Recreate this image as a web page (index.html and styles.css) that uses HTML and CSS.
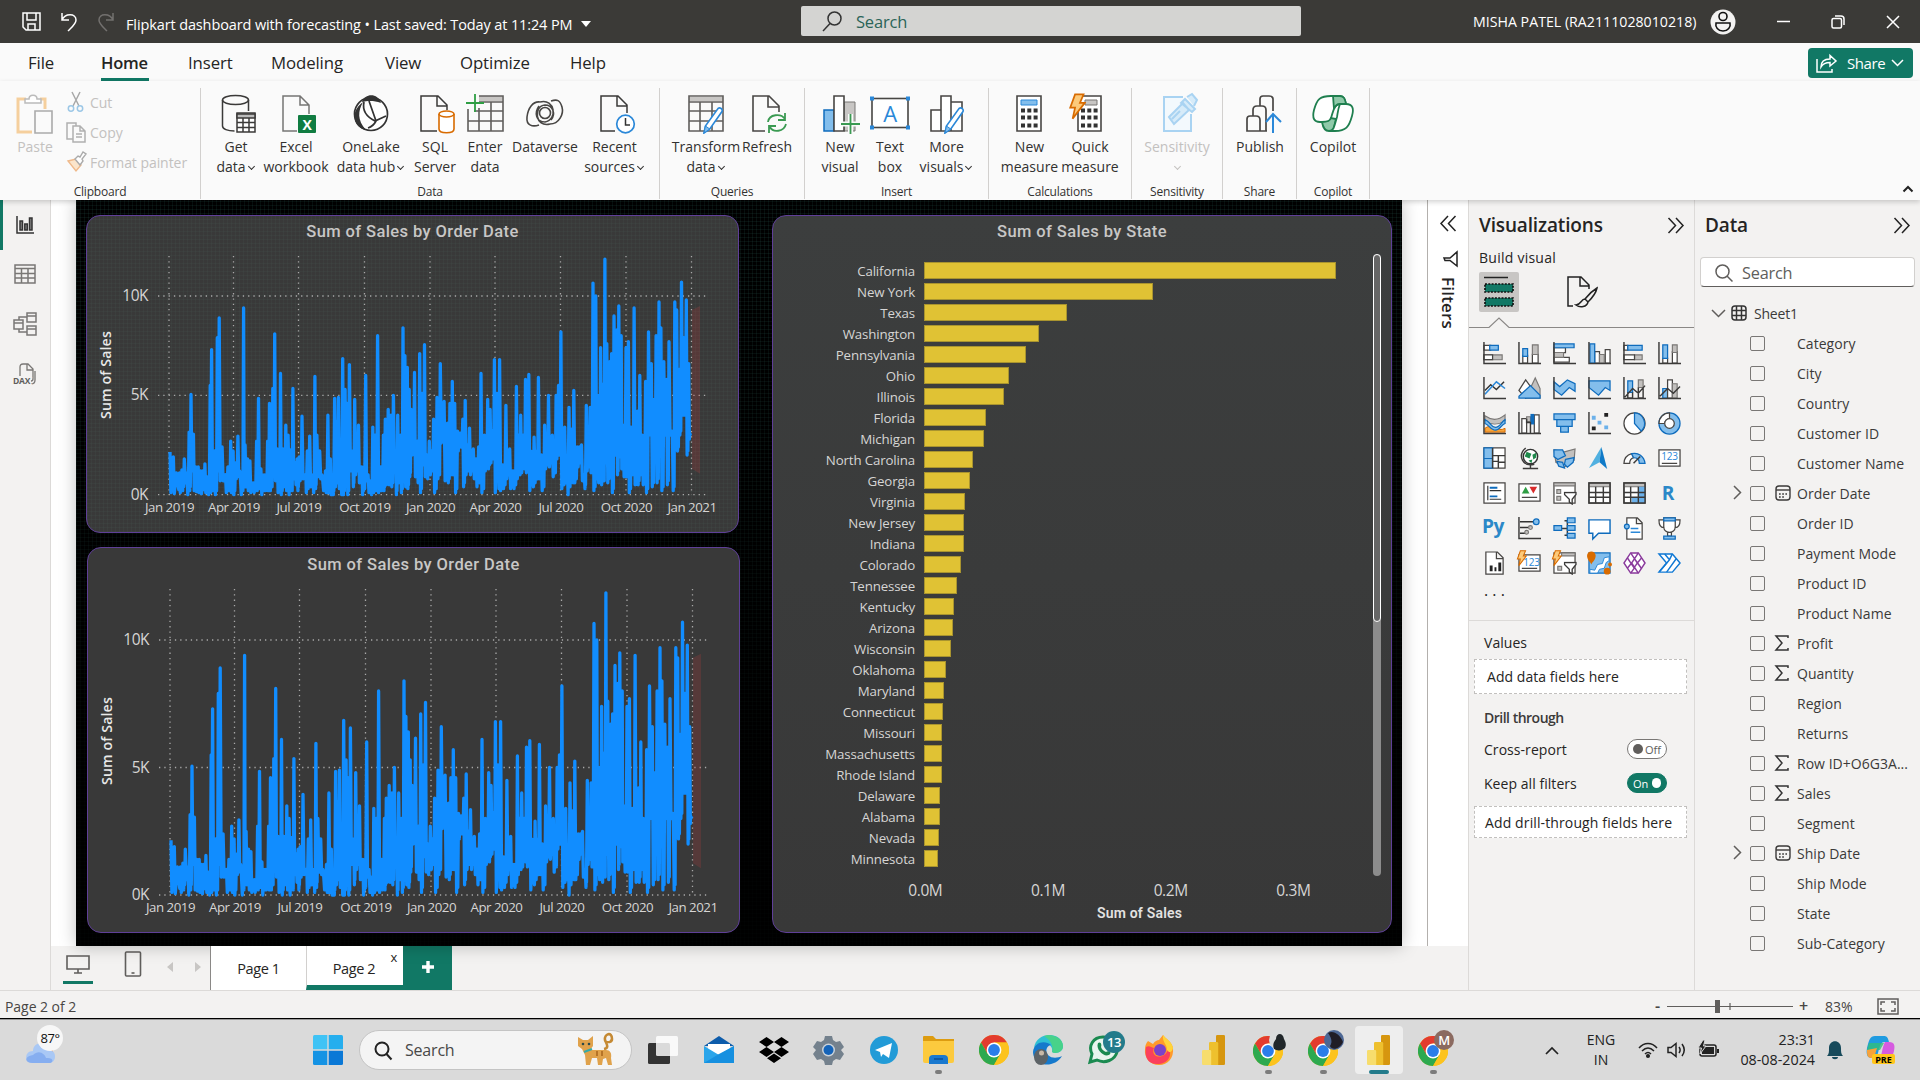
FILE: index.html
```html
<!DOCTYPE html>
<html lang="en">
<head>
<meta charset="utf-8">
<title>Flipkart dashboard with forecasting</title>
<link rel="stylesheet" href="styles.css">
</head>
<body>
<svg class="defs" width="0" height="0">
  <defs>
    <symbol id="chrome" viewBox="0 0 30 30"><circle cx="15" cy="15" r="15" fill="#fbbc05"/><path d="M2 7.5A15 15 0 0 1 28 7.5L15 7.5 8.5 18.8z" fill="#e33b2e"/><path d="M2 7.5 8.5 18.8 21.5 18.8 15 30A15 15 0 0 1 2 7.5z" fill="#2da94f"/><path d="M15 7.5H28A15 15 0 0 1 15 30L21.5 18.8z" fill="#fcc31e"/><circle cx="15" cy="15" r="7.4" fill="#fff"/><circle cx="15" cy="15" r="5.9" fill="#2b7de9"/></symbol>
    <symbol id="pbi" viewBox="0 0 24 30"><rect x="14" y="0" width="9" height="30" rx="1.2" fill="#d6960f"/><path d="M7 8.2a1.2 1.2 0 0 1 1.2-1.2H15a1.2 1.2 0 0 1 1.2 1.2V30H7z" fill="#eec02e"/><path d="M0 16.2A1.2 1.2 0 0 1 1.2 15H8a1.2 1.2 0 0 1 1.2 1.2V30H1.2A1.2 1.2 0 0 1 0 28.8z" fill="#f7dd6d"/></symbol>
    <symbol id="pencil" viewBox="0 0 20 28"><path d="M1 27l1.4-7L15 2.5a2.6 2.6 0 0 1 4 3L6.800 23z" fill="#fff" stroke="#2b88d8" stroke-width="1.600"/><path d="M1 27l1.400-7 4.400 3z" fill="#83beec" stroke="#2b88d8"/></symbol>
    <symbol id="bolt" viewBox="0 0 14 22"><path d="M5 1h7L9 8h4L3 21l2-9H1z" fill="#fcca7a" stroke="#d86b00" stroke-width="1.400"/></symbol>
    <symbol id="funnel" viewBox="0 0 14 14"><path d="M1 1h12v2L9 8v5l-3-2V8L1 3z" fill="#fff" stroke="#3b3a39" stroke-width="1.400"/></symbol>
    <symbol id="cal" viewBox="0 0 16 16"><rect x="1" y="1" width="14" height="14" rx="3" fill="none" stroke="#3b3a39" stroke-width="1.400"/><path d="M1 5h14" stroke="#3b3a39" stroke-width="1.400"/><path d="M4 9h8M4 12h5" stroke="#3b3a39" stroke-width="1.700" stroke-dasharray="1.700 1.500"/></symbol>
  </defs>
</svg>

<header class="titlebar">
  <div class="quick">
    <svg width="19" height="19" viewBox="0 0 19 19" class="ln w"><path d="M1 1h17v17H4l-3-3zM5 1v7h9V1M6 18v-6h7v6"/></svg>
    <svg width="18" height="20" viewBox="0 0 18 20" class="ln w"><path d="M2 1v7h7M2 8C5 1 16 1 16 8c0 4-4 7-8 11"/></svg>
    <svg width="18" height="20" viewBox="0 0 18 20" class="ln dim"><path d="M16 1v7H9M16 8C13 1 2 1 2 8c0 4 4 7 8 11"/></svg>
  </div>
  <div class="doc"><span>Flipkart dashboard with forecasting • Last saved: Today at 11:24 PM</span><i class="caret"></i></div>
  <div class="topsearch">
    <svg width="20" height="21" viewBox="0 0 20 21" class="ln" stroke="#333"><circle cx="12.500" cy="7.500" r="6.500"/><path d="M8 12.500L1 20"/></svg>
    <span>Search</span>
  </div>
  <div class="user">
    <span>MISHA PATEL (RA2111028010218)</span>
    <svg class="avatar" width="26" height="26" viewBox="0 0 26 26"><circle cx="13" cy="13" r="12.500" fill="#f3f2f1"/><circle cx="13" cy="7.500" r="4" fill="none" stroke="#111" stroke-width="1.600"/><path d="M6 14h14c1 4-2 8-7 8s-8-4-7-8z" fill="none" stroke="#111" stroke-width="1.600"/></svg>
    <svg width="14" height="14" viewBox="0 0 14 14" class="ln w"><path d="M1 6.500h13"/></svg>
    <svg width="14" height="14" viewBox="0 0 14 14" class="ln w"><rect x="1" y="3.500" width="9.500" height="9.500" rx="1.500"/><path d="M4 1h6a3 3 0 0 1 3 3v6"/></svg>
    <svg width="14" height="14" viewBox="0 0 14 14" class="ln w"><path d="M1 1l12 12M13 1L1 13"/></svg>
  </div>
</header>

<nav class="menu">
  <a class="m1">File</a><a class="m2 on">Home</a><a class="m3">Insert</a><a class="m4">Modeling</a><a class="m5">View</a><a class="m6">Optimize</a><a class="m7">Help</a>
  <button class="share"><svg width="21" height="19" viewBox="0 0 21 19" class="ln w"><path d="M1 5v13h15v-3M5 13c0-5 3-8 9-8V1.500l6 5.500-6 5V8.500c-4 0-7 1-9 4.500z"/></svg><span>Share</span><svg width="13" height="8" viewBox="0 0 13 8" class="ln w"><path d="M1 1l5.500 5.500L12 1"/></svg></button>
</nav>

<section class="ribbon">
  <div class="group g-clip">
    <div class="btns">
      <div class="btn off w-paste"><svg width="40" height="40" viewBox="0 0 40 40"><path d="M11 5H3v33h14M25 5h5v10" fill="none" stroke="#f5cf9d" stroke-width="3"/><path d="M10 9V5h4c0-5 8-5 8 0h4v4z" fill="#fff" stroke="#bbb" stroke-width="1.500"/><path d="M20 17h17v22H20z" fill="#fafafa" stroke="#aaa" stroke-width="1.600"/></svg><span>Paste</span></div>
      <div class="small off">
        <div><svg width="20" height="20" viewBox="0 0 20 20" class="ln" stroke="#a8a8a8"><path d="M6 0l7 14M14 0L7 14"/><circle cx="5" cy="16.500" r="2.700" stroke="#9cc7e6"/><circle cx="14" cy="16.500" r="2.700" stroke="#9cc7e6"/></svg><span>Cut</span></div>
        <div><svg width="20" height="20" viewBox="0 0 20 20" class="ln" stroke="#b0b0b0"><path d="M7 17H1V1h9v3M7 4h7l5 5v11H7zM14 4v5h5M10 12h6M10 15h6"/></svg><span>Copy</span></div>
        <div><svg width="20" height="20" viewBox="0 0 20 20"><path d="M2 9l8-2 5 6-5 6z" fill="#fbe5cb" stroke="#efb98a" stroke-width="1.400"/><path d="M9 7l3-3 2 1 3-5 3 2-4 5 1 2-3 4z" fill="#fff" stroke="#aaa" stroke-width="1.400"/></svg><span>Format painter</span></div>
      </div>
    </div>
    <b>Clipboard</b>
  </div>
  <div class="group g-data">
    <div class="btns">
      <div class="btn" data-w="60"><svg width="40" height="40" viewBox="0 0 40 40" class="ln" stroke="#3b3a39"><ellipse cx="19.500" cy="6" rx="13" ry="4.500"/><path d="M6.500 6v26c0 3 5 5 12 5M32.500 6v11"/><path d="M21 19h18v19H21z" fill="#fff"/><path d="M21 20h18v4H21z" fill="#bbb"/><path d="M21 28.500h18M21 33.500h18M27 24v14M33 24v14"/></svg><span>Get<br>data<i class="dd"></i></span></div>
      <div class="btn" data-w="60"><svg width="40" height="40" viewBox="0 0 40 40"><path d="M21 37H7V2h17l9 9v9M24 2v9h9" fill="none" stroke="#767574" stroke-width="1.500"/><rect x="22" y="21" width="18" height="18" rx="1" fill="#107c41"/><text x="31" y="36" class="xl">X</text></svg><span>Excel<br>workbook</span></div>
      <div class="btn" data-w="90"><svg width="40" height="40" viewBox="0 0 40 40"><circle cx="20" cy="20" r="16.500" fill="#fff" stroke="#333" stroke-width="1.700"/><path d="M11 8C14-1 27-1 30 9 22 6 16 7 11 8zM12 8C7 17 6 26 15 36 3 34-2 18 12 8z" fill="#333"/><path d="M13 8c-2 9 3 15 11 19l11-5M18 7l7 20c-2 4-5 6-8 7" fill="none" stroke="#333" stroke-width="1.700"/></svg><span>OneLake<br>data hub<i class="dd"></i></span></div>
      <div class="btn" data-w="38"><svg width="40" height="40" viewBox="0 0 40 40"><path d="M22 37H6V2h17l9 9v5M22 2v10h10" fill="none" stroke="#3b3a39" stroke-width="1.500"/><path d="M24 20v15c0 5 15 5 15 0V20" fill="#fff" stroke="#d86b00" stroke-width="1.600"/><ellipse cx="31.500" cy="20" rx="7.500" ry="3" fill="#fff" stroke="#d86b00" stroke-width="1.600"/></svg><span>SQL<br>Server</span></div>
      <div class="btn" data-w="62"><svg width="40" height="40" viewBox="0 0 40 40"><path d="M14 2h23v5H14z" fill="#c8c6c4"/><path d="M14 2h24v35H3V15M14 8h24M9 17h29M3 27h35M14 14v23M26 8v29" fill="none" stroke="#605e5c" stroke-width="1.600"/><path d="M1 9h18M10 0v18" stroke="#2f9e44" stroke-width="1.800"/></svg><span>Enter<br>data</span></div>
      <div class="btn" data-w="58"><svg width="40" height="40" viewBox="0 0 40 40" fill="none" stroke="#484644" stroke-width="1.600"><circle cx="20" cy="19" r="5.500"/><path d="M25 30C10 34 8 12 20 11c8 0 11 9 6 15M15 8c15-4 18 18 5 20-9 0-11-9-6-16M25 30c9 0 14-10 12-17S32 5 26 7M15 8C8 7 3 14 2 23s6 10 12 8"/></svg><span>Dataverse</span></div>
      <div class="btn" data-w="81"><svg width="40" height="40" viewBox="0 0 40 40"><path d="M20 37H6V2h17l9 9v8M22 2v10h10" fill="none" stroke="#3b3a39" stroke-width="1.500"/><circle cx="30.500" cy="30" r="8.800" fill="#fff" stroke="#2b88d8" stroke-width="1.700"/><path d="M30.500 24v7H35" fill="none" stroke="#333" stroke-width="1.500"/></svg><span>Recent<br>sources<i class="dd"></i></span></div>
    </div>
    <b>Data</b>
  </div>
  <div class="group g-query">
    <div class="btns">
      <div class="btn" data-w="78"><svg width="40" height="40" viewBox="0 0 40 40"><path d="M3 3h34v4H3z" fill="#c8c6c4"/><path d="M3 2h34v35H3zM3 8h34M3 17h34M3 27h34M14 8v29M26 8v29" fill="none" stroke="#605e5c" stroke-width="1.600"/><use href="#pencil" x="14" y="12" width="26" height="28"/></svg><span>Transform<br>data<i class="dd"></i></span></div>
      <div class="btn" data-w="44"><svg width="40" height="40" viewBox="0 0 40 40"><path d="M18 37H6V2h16l10 10v6M21 2v11h11" fill="none" stroke="#484644" stroke-width="1.600"/><path d="M21 28c1-8 13-9 17-3M39 30c-2 8-13 9-16 3M38 19v7h-7M22 39v-7h7" fill="none" stroke="#3a9a52" stroke-width="1.800"/></svg><span>Refresh</span></div>
    </div>
    <b>Queries</b>
  </div>
  <div class="group g-insert">
    <div class="btns">
      <div class="btn" data-w="50"><svg width="40" height="40" viewBox="0 0 40 40"><path d="M24 8h11v29H24z" fill="#c8c6c4" stroke="#797775"/><path d="M4 16h10v21H4z" fill="#83beec" stroke="#0f6cbd" stroke-width="1.500"/><path d="M14 2h10v35H14z" fill="#fff" stroke="#484644" stroke-width="1.600"/><path d="M21 30h19M30.500 20v20" stroke="#fafafa" stroke-width="5"/><path d="M21 30h19M30.500 20v20" stroke="#3a9a52" stroke-width="1.800"/></svg><span>New<br>visual</span></div>
      <div class="btn" data-w="50"><svg width="40" height="40" viewBox="0 0 40 40"><rect x="2" y="4.500" width="36" height="29" fill="#fff" stroke="#484644" stroke-width="1.600"/><path d="M0 2.500h4v4H0zM36 2.500h4v4h-4zM0 31.500h4v4H0zM36 31.500h4v4h-4z" fill="#2b88d8"/><text x="20" y="28" class="tb">A</text></svg><span>Text<br>box</span></div>
      <div class="btn" data-w="63"><svg width="40" height="40" viewBox="0 0 40 40"><path d="M4 16h10v21H4zM14 2h10v35H14zM24 8h11v29H24z" fill="#fff" stroke="#484644" stroke-width="1.600"/><use href="#pencil" x="14" y="12" width="26" height="28"/></svg><span>More<br>visuals<i class="dd"></i></span></div>
    </div>
    <b>Insert</b>
  </div>
  <div class="group g-calc">
    <div class="btns">
      <div class="btn" data-w="61"><svg width="40" height="40" viewBox="0 0 40 40"><path d="M7 2h24v35H7z" fill="#fff" stroke="#484644" stroke-width="1.600"/><path d="M11 6h16v5H11z" fill="#83beec" stroke="#2b88d8"/><path d="M11 16.500h17M11 23.500h17M11 31.500h17" stroke="#333" stroke-width="4" stroke-dasharray="4 2.300"/></svg><span>New<br>measure</span></div>
      <div class="btn" data-w="60"><svg width="40" height="40" viewBox="0 0 40 40"><path d="M8 2h23v35H8z" fill="#fff" stroke="#484644" stroke-width="1.600"/><path d="M15 6h12v5H15z" fill="#c8c6c4" stroke="#797775"/><path d="M11 16.500h17M11 23.500h17M11 31.500h17" stroke="#333" stroke-width="4" stroke-dasharray="4 2.300"/><use href="#bolt" x="-1" y="-1" width="17" height="27"/></svg><span>Quick<br>measure</span></div>
    </div>
    <b>Calculations</b>
  </div>
  <div class="group g-sens">
    <div class="btns">
      <div class="btn off" data-w="76"><svg width="40" height="40" viewBox="0 0 40 40"><path d="M26 3H7v34h27V20" fill="#f3f9fd" stroke="#a9d3f2" stroke-width="2"/><path d="M12 23l14-14 6 7-15 14zM15 25l8-8M24 9l4-4 10 10-3 3zM30 3l5-3 5 6-3 6" fill="#d6ebf9" stroke="#a9d3f2" stroke-width="2"/></svg><span>Sensitivity<br><i class="dd"></i></span></div>
    </div>
    <b>Sensitivity</b>
  </div>
  <div class="group g-share">
    <div class="btns">
      <div class="btn" data-w="60"><svg width="40" height="40" viewBox="0 0 40 40" fill="none" stroke="#484644" stroke-width="1.700"><path d="M7 37V25c0-3 2-3 3-3h6c3 0 4 1 4 4v11zM13 22v-6c0-3 1-4 4-4h5c3 0 4 1 4 4v21M20 12V5c0-2 1-3 3-3h6c3 0 4 1 4 3v12M20 37h7"/><path d="M33 39V21M26 28l7-8 8 8" stroke="#2b88d8" stroke-width="2"/></svg><span>Publish</span></div>
    </div>
    <b>Share</b>
  </div>
  <div class="group g-cop">
    <div class="btns">
      <div class="btn" data-w="60"><svg width="40" height="40" viewBox="0 0 40 40" stroke="#1f7f4f" stroke-width="1.800"><path d="M18 2h9c4 0 5 3 6 8h-6c-5 0-6 4-9 14-1 4-3 4-7 4H7C1 28-1 24 1 16 4 5 7 2 18 2z" fill="#fff"/><path d="M20 2h7c4 0 5 3 6 8h-6c-3 0-5 2-6 5zM9 28c1 6 3 9 7 9h4l3-12-5-1c-1 3-3 4-9 4z" fill="#8fc9a9"/><path d="M27 10h6c7 0 8 5 6 12-3 11-6 15-17 15h-6c5 0 5-4 8-14 1-6 1-8 3-13z" fill="#fff"/></svg><span>Copilot</span></div>
    </div>
    <b>Copilot</b>
  </div>
  <svg class="collapse" width="12" height="8" viewBox="0 0 12 8"><path d="M1.500 6.500L6 2l4.500 4.500" fill="none" stroke="#222" stroke-width="2"/></svg>
</section>

<main class="work">
  <aside class="rail">
    <div class="sel"><svg width="20" height="20" viewBox="0 0 20 20" fill="none" stroke="#333" stroke-width="1.500"><path d="M2 1v17h17"/><path d="M5 6h2.500v9H5zM9.800 9h2.500v6H9.800zM14.500 3H17v12h-2.500z" fill="#888"/></svg></div>
    <div><svg width="22" height="20" viewBox="0 0 22 20" fill="none" stroke="#797775" stroke-width="1.500"><path d="M1 1h20v18H1zM1 4.500h20M1 9.500h20M1 14h20M7.500 4.500V19M14 4.500V19"/></svg></div>
    <div><svg width="24" height="24" viewBox="0 0 24 24" fill="none" stroke="#797775" stroke-width="1.500"><path d="M1 8h9v9H1zM1 11h9M14 1h9v9h-9zM14 4h9M14 14h9v9h-9zM14 17h9M6 8V5h8M6 17v3h8"/></svg></div>
    <div><svg width="24" height="24" viewBox="0 0 24 24" fill="none" stroke="#797775" stroke-width="1.300"><path d="M7 14V5c0-2 1-3 3-3h5l5 5v10c0 1-1 2-2 2M14 2v6h6M22 9v9c0 3-2 4-4 4"/><text x="0" y="22" class="dax">DAX</text></svg></div>
  </aside>
  <section class="center">
    <div class="stage">
      <div class="report">
        <article class="card c1"><h3>Sum of Sales by Order Date</h3><svg class="line" id="line1" width="650" height="285"></svg></article>
        <article class="card c3"><h3>Sum of Sales by State</h3>
          <div class="barwrap"><div id="bars"></div><div class="scroll"><div></div></div></div>
          <div class="ticks"><span>0.0M</span><span>0.1M</span><span>0.2M</span><span>0.3M</span></div>
          <div class="axt">Sum of Sales</div>
        </article>
        <article class="card c2"><h3>Sum of Sales by Order Date</h3><svg class="line" id="line2" width="650" height="352"></svg></article>
      </div>
      <div class="filters">
        <svg width="17" height="17" viewBox="0 0 17 17" class="ln" stroke="#222"><path d="M8 1L1 8.500 8 16M15.500 1L8.500 8.500l7 7.500"/></svg>
        <svg width="15" height="16" viewBox="0 0 15 16" class="ln" stroke="#222"><path d="M14 1v14L7 9.500H2L1 7h6z"/></svg>
        <span>Filters</span>
      </div>
    </div>
    <footer class="tabs">
      <div class="dev on"><svg width="26" height="22" viewBox="0 0 26 22" fill="none" stroke="#605e5c" stroke-width="1.600"><path d="M2 2h22v13H2zM13 15v4M9 19h8"/></svg></div>
      <div class="dev ph"><svg width="18" height="26" viewBox="0 0 18 26" fill="none" stroke="#605e5c" stroke-width="1.600"><rect x="1.500" y="1" width="15" height="24" rx="1"/><path d="M7.500 22h3"/></svg></div>
      <div class="arr"><svg width="36" height="12" viewBox="0 0 36 12" fill="#c8c6c4"><path d="M7 1v10L1 6zM29 1v10l6-5z"/></svg></div>
      <div class="tab">Page 1</div>
      <div class="tab cur">Page 2<i>x</i></div>
      <div class="add"><svg width="14" height="14" viewBox="0 0 14 14"><path d="M7 1v12M1 7h12" stroke="#fff" stroke-width="3.400"/></svg></div>
    </footer>
  </section>

  <section class="vis">
    <div class="phead"><h2>Visualizations</h2><svg width="17" height="17" viewBox="0 0 17 17" class="ln" stroke="#222"><path d="M1.500 1l7 7.500-7 7.500M9 1l7 7.500L9 16"/></svg></div>
    <h4>Build visual</h4>
    <div class="modes">
      <div class="mode on"><svg width="40" height="40" viewBox="0 0 40 40"><path d="M5 5.500h24" stroke="#222" stroke-width="1.500"/><path d="M6 12h28v8H6zM6 26h28v8H6z" fill="#117865" stroke="#111" stroke-width="1.700" stroke-dasharray="2 1.300"/></svg></div>
      <div class="mode"><svg width="32" height="32" viewBox="0 0 32 32" fill="none" stroke="#222" stroke-width="1.500"><path d="M6 30H1V1h13l8 8v4M13 1v9h9M30 12c-5 3-9 7-12 11l3 3c4-4 8-9 9-14zM18 23c-4 0-4 6-9 6 4 3 11 2 12-3"/></svg></div>
    </div>
    <svg class="notch" width="225" height="12" viewBox="0 0 225 12"><path d="M0 10.500h20L30 1l10 9.500h185" fill="none" stroke="#8a8886" stroke-width="1.200"/></svg>
    <div class="vgrid">
      <svg viewBox="0 0 24 24"><path class="g" d="M1 13.500h19v5H1z"/><path class="wf" d="M1 3.500h7v5H1zM1 13.500h9v5H1z"/><path class="b" d="M7 3.500h9v5H7z"/><path class="ax" d="M1 0v22.500h23"/></svg>
      <svg viewBox="0 0 24 24"><path class="wf" d="M5 14h5v8H5zM15 13h6v9h-6z"/><path class="g" d="M15 3h6v10h-6z"/><path class="b" d="M5 7h5v8H5z"/><path class="ax" d="M1 0v22.500h23"/></svg>
      <svg viewBox="0 0 24 24"><path class="wf" d="M1 6h12v5H1zM1 16h16v5H1z"/><path class="g" d="M1 11h10v5H1z"/><path class="b" d="M1 2h21v4H1z"/><path class="ax" d="M1 0v22.500h23"/></svg>
      <svg viewBox="0 0 24 24"><path class="wf" d="M7 10h5v12H7zM18 8h5v14h-5z"/><path class="g" d="M12 13h5v9h-5z"/><path class="b" d="M2 2h5v20H2z"/><path class="ax" d="M1 0v22.500h23"/></svg>
      <svg viewBox="0 0 24 24"><path class="g" d="M12 13.500h8v5h-8z"/><path class="wf" d="M1 3.500h4v5H1zM1 13.500h11v5H1z"/><path class="b" d="M5 3.500h15v5H5z"/><path class="ax" d="M1 0v22.500h23"/></svg>
      <svg viewBox="0 0 24 24"><path class="wf" d="M5 17h5v5H5zM15 10h5v12h-5z"/><path class="g" d="M15 3h5v8h-5z"/><path class="b" d="M5 3h5v14H5z"/><path class="ax" d="M1 0v22.500h23"/></svg>

      <svg viewBox="0 0 24 24"><path d="M2 14l6-6 6 5 8-8" fill="none" stroke="#333" stroke-width="1.500"/><path d="M2 18L14 5l9 7" fill="none" stroke="#2b88d8" stroke-width="1.600"/><path class="ax" d="M1 0v22.500h23"/></svg>
      <svg viewBox="0 0 24 24"><path class="g" d="M8 22L18 1l5 11v10z"/><path class="wf" d="M1 14L8 3l8 11-8 8z"/><path class="b" d="M1 22v-2l12-11 10 10v3z"/></svg>
      <svg viewBox="0 0 24 24"><path class="b" d="M1 5l6 5 8-7 8 4v8l-6-4-8 8-8-6z"/><path class="ax" d="M1 0v22.500h23"/></svg>
      <svg viewBox="0 0 24 24"><path class="b" d="M1 4h22v10l-5-3-7 8-10-8z"/><path class="ax" d="M1 0v22.500h23"/></svg>
      <svg viewBox="0 0 24 24"><path class="b" d="M5 4h5v12H5z"/><path class="g" d="M16 3h5v8h-5z"/><path class="ax" d="M1 0v22.500h23M5 16v6h5v-6M16 11v11h5V11M2 21l8-9 6 5 7-8"/></svg>
      <svg viewBox="0 0 24 24"><path class="b" d="M5 12h5v10H5z"/><path class="wf" d="M10 3h5v19h-5z"/><path class="g" d="M15 7h5v15h-5z"/><path class="ax" d="M1 0v22.500h23M2 20l8-8 6 5 7-7"/></svg>

      <svg viewBox="0 0 24 24"><path class="g" d="M2 4c7 5 14 5 21-1v6c-8 5-14 5-21 0z"/><path d="M2 17c7-6 13 5 21 0v4H2z" fill="#f7a53c" stroke="#d86b00"/><path class="b" d="M2 8c6 2 6 8 11 8s6-6 10-8v4c-4 1-5 7-10 7S6 13 2 12z"/><path class="ax" d="M1 0v22.500h23"/></svg>
      <svg viewBox="0 0 24 24"><path class="wf" d="M4 7h5v15H4zM17 3h5v19h-5z"/><path class="g" d="M9 5h4v5H9z"/><path d="M13 2h4v11h-4z" fill="#0f6cbd"/><path class="ax" d="M1 0v22.500h23M9 7v4h4v11"/></svg>
      <svg viewBox="0 0 24 24"><path class="b" d="M1 2h22v6H1zM4 8h16v7H4zM8 15h8v6H8z"/></svg>
      <svg viewBox="0 0 24 24"><path d="M4 4h4v4H4zM10 9h4v4h-4zM17 14h4v4h-4z" fill="#6cb1ea"/><path d="M17 1h4v4h-4zM4 15h4v4H4z" fill="#222"/><path class="ax" d="M1 0v22.500h23"/></svg>
      <svg viewBox="0 0 24 24"><circle cx="12" cy="12" r="11" class="wf"/><path class="b" d="M12 12V1a11 11 0 0 1 7 19z"/></svg>
      <svg viewBox="0 0 24 24"><circle cx="12" cy="12" r="11" class="b"/><path class="wf" d="M1 12A11 11 0 0 1 12 1v6a5 5 0 0 0-5 5z"/><circle cx="12" cy="12" r="5" class="wf"/></svg>

      <svg viewBox="0 0 24 24"><path class="wf" d="M1 1h22v21H1z"/><path class="b" d="M1 1h9v11H1zM1 12h9v10H1z"/><path class="ax" d="M10 1v21M10 9h13M16 9v13M10 15h6M16 16h7"/></svg>
      <svg viewBox="0 0 24 24"><circle cx="13" cy="10" r="7.500" fill="#fff" stroke="#333" stroke-width="1.500"/><path d="M9 5l5 2-2 5-5-2zM15 8l4-2v5l-3 2zM11 14l4-1-1 4z" fill="#1f8a4c"/><path class="ax" d="M8 1C-1 9 5 21 17 18M13 19v3M5 22.500h16"/></svg>
      <svg viewBox="0 0 24 24"><path class="g" d="M1 3l11 2 11-3-1 12-10 7-9-5z"/><path class="b" d="M1 3h9l3 6-8 4-4-3zM13 13l9-2-1 5-6 5-3-3zM4 15l6 1 2 6-6-2z"/></svg>
      <svg viewBox="0 0 24 24"><path d="M14 0L1 22l11-6z" fill="#50b0e0"/><path d="M14 0l6 23-8-7z" fill="#0f7ac8"/></svg>
      <svg viewBox="0 0 24 24"><path class="wf" d="M1 17a11 11 0 0 1 8-10l2 4c-3 1-4 3-4 6z"/><path class="b" d="M9 7c7-2 13 3 14 10h-6c0-4-2-6-6-6z"/><path class="ax" d="M11 17l7-7"/></svg>
      <svg viewBox="0 0 24 24"><path class="wf" d="M1 3h22v17H1zM4 17h16"/><text x="12" y="14" class="n123">123</text></svg>

      <svg viewBox="0 0 24 24"><path class="wf" d="M1 1h22v21H1z"/><path d="M5 4v15" stroke="#333" stroke-width="1.200"/><path d="M7 6h8M7 15h8" stroke="#0f6cbd" stroke-width="2"/><path d="M7 9h12M7 18h12" stroke="#333" stroke-width="1.300"/></svg>
      <svg viewBox="0 0 24 24"><path class="wf" d="M1 2h22v18H1zM4 16h16"/><path d="M4 12l4-7 4 7z" fill="#2f9e44"/><path d="M12 5h8l-4 7z" fill="#d92c2c"/></svg>
      <svg viewBox="0 0 24 24"><path class="wf" d="M1 1h22v21H1z"/><path class="g" d="M1 1h22v3H1zM4 8h4v4H4zM4 15h4v4H4z"/><use href="#funnel" x="11" y="10" width="14" height="14"/></svg>
      <svg viewBox="0 0 24 24"><path class="wf" d="M1 1h22v21H1z"/><path class="g" d="M1 1h22v4H1z"/><path class="ax" d="M1 1h22v21H1zM1 11h22M1 16h22M8 5v17M16 5v17"/></svg>
      <svg viewBox="0 0 24 24"><path class="wf" d="M1 1h22v21H1z"/><path class="g" d="M1 1h22v4H1z"/><path d="M16 5h7v17H9v-6h7z" fill="#6cb1ea"/><path class="ax" d="M1 1h22v21H1zM1 11h22M1 16h22M8 5v17M16 5v17"/></svg>
      <svg viewBox="0 0 24 24"><text x="4" y="19" class="big">R</text></svg>

      <svg viewBox="0 0 24 24"><text x="-1" y="17" class="big">Py</text></svg>
      <svg viewBox="0 0 24 24"><path d="M2 5h14M2 11h9M2 17h6" stroke="#333" stroke-width="1.500"/><circle cx="19" cy="5" r="3" class="b"/><circle cx="13" cy="11" r="2" class="g"/><circle cx="9" cy="16" r="2" class="g"/><path class="ax" d="M1 0v22.500h23"/></svg>
      <svg viewBox="0 0 24 24"><path class="ax" d="M8 12h7M15 3v17M12 4h4M12 19h4"/><path class="b" d="M1 9h8v5H1zM15 1h8v5h-8zM15 9h8v5h-8zM15 17h8v5h-8z"/></svg>
      <svg viewBox="0 0 24 24"><path d="M1 3h22v14H11l-6 6v-6H1z" fill="#fff" stroke="#0f6cbd" stroke-width="1.500"/></svg>
      <svg viewBox="0 0 24 24"><path class="wf" d="M4 1h11l5 5v17H4zM14 1v6h6"/><path d="M8 12h8M8 16h10" stroke="#2b88d8" stroke-width="1.500"/><circle cx="4" cy="10" r="2.500" class="b"/></svg>
      <svg viewBox="0 0 24 24"><path class="wf" d="M6 1h12v9c0 5-4 6-6 6s-6-1-6-6zM6 3H1c0 6 2 8 5 8M18 3h5c0 6-2 8-5 8M10 16v4h4v-4"/><path class="b" d="M6 1h12v3H6zM6 20h12v3H6z"/></svg>

      <svg viewBox="0 0 24 24"><path class="wf" d="M3 0h12l6 6v17H3zM14 0v7h7"/><path d="M7 14h3v6H7zM12 16h2v4h-2zM16 11h3v9h-3z" fill="#222"/></svg>
      <svg viewBox="0 0 24 24"><path class="wf" d="M1 3h22v17H1zM4 17h16"/><text x="14" y="15" class="n123">123</text><use href="#bolt" x="-2" y="-2" width="12" height="17"/></svg>
      <svg viewBox="0 0 24 24"><path class="wf" d="M1 1h22v21H1z"/><path class="g" d="M9 1h14v3H9zM5 15h4v4H5z"/><use href="#funnel" x="11" y="10" width="14" height="14"/><use href="#bolt" x="-2" y="-2" width="12" height="17"/></svg>
      <svg viewBox="0 0 24 24"><path class="b" d="M1 1h22v21H1z"/><path d="M2 18l5 1 3-6 5-1 2-6 5-1v4l-3 2-2 6-5 1-2 4H2z" fill="#fff" stroke="#2b88d8"/><path d="M-1 4c0-6 9-6 9 0 0 4-3 6-4.500 9C2 10-1 8-1 4z" fill="#d86b00"/><circle cx="20" cy="20" r="3.500" fill="#d86b00"/><circle cx="23" cy="13" r="2" fill="#d86b00"/></svg>
      <svg viewBox="0 0 24 24" fill="#fff" stroke="#8a3a9c" stroke-width="1.500"><path d="M8 1h8l7 10.500-7 10.500H8L1 11.500z"/><path d="M8 1l7 10.500-3.500 5L4.500 6M16 1L9 11.500l7 10.500M12 7l7.500 10.500M4.500 17L9 11.500M15 11.500L19.500 6M8 22l4-5.500" fill="none"/></svg>
      <svg viewBox="0 0 24 24"><path d="M1 2h14l8 9.500L15 21H1l8-9.500z" fill="#fff" stroke="#0f78d4" stroke-width="1.500"/><path d="M7 2l5 6L2 20M15 2L12 8M9 21L19 7" fill="none" stroke="#0f78d4" stroke-width="1.500"/></svg>
    </div>
    <div class="dots">. . .</div>
    <div class="wells">
      <p class="first">Values</p>
      <div class="well">Add data fields here</div>
      <p class="drill">Drill through</p>
      <div class="opt"><span>Cross-report</span><div class="tog"><i></i>Off</div></div>
      <div class="opt"><span>Keep all filters</span><div class="tog yes">On<i></i></div></div>
      <div class="well two">Add drill-through fields here</div>
    </div>
  </section>

  <section class="data">
    <div class="phead"><h2>Data</h2><svg width="17" height="17" viewBox="0 0 17 17" class="ln" stroke="#222"><path d="M1.500 1l7 7.500-7 7.500M9 1l7 7.500L9 16"/></svg></div>
    <div class="dsearch"><svg width="18" height="18" viewBox="0 0 18 18" class="ln" stroke="#605e5c"><circle cx="7.500" cy="7.500" r="6.500"/><path d="M12 12l5.500 5.500"/></svg><span>Search</span></div>
    <div class="sheet"><svg width="15" height="9" viewBox="0 0 15 9" class="ln" stroke="#605e5c"><path d="M1 1l6.500 6.500L14 1"/></svg><svg width="16" height="16" viewBox="0 0 16 16" fill="none" stroke="#333" stroke-width="1.500"><rect x="1" y="1" width="14" height="14" rx="3"/><path d="M1 5.500h14M1 10.500h14M5.500 1v14M10.500 1v14"/></svg><span>Sheet1</span></div>
    <div id="fields"></div>
  </section>
</main>

<footer class="status">
  <span>Page 2 of 2</span>
  <div class="zoom"><b>-</b><svg width="126" height="16" viewBox="0 0 126 16"><path d="M0 8.500h126M63 5v7" stroke="#605e5c" stroke-width="1.200"/><path d="M48 2h5v13h-5z" fill="#605e5c"/></svg><b>+</b><span>83%</span><svg width="22" height="17" viewBox="0 0 22 17" fill="none" stroke="#605e5c" stroke-width="1.500"><path d="M1 1h20v15H1zM4 7V4h4M14 4h4v3M4 10v3h4M14 13h4v-3"/></svg></div>
</footer>

<footer class="taskbar">
  <div class="weather"><svg width="48" height="40" viewBox="0 0 48 40"><circle cx="20" cy="23" r="8" fill="#f0822d"/><path d="M8 36c-9 0-9-12 0-12 0-10 15-11 16-1 8 0 8 13 0 13z" fill="#a9c8f5"/><path d="M8 36c-9 0-9-7 0-8 6-6 12-1 13 3 8-1 8 5 3 5z" fill="#86aef0"/><circle cx="25" cy="11" r="13" fill="#f7f7f7"/><text x="25" y="16" class="temp">87°</text></svg></div>
  <svg class="start" width="30" height="30" viewBox="0 0 30 30"><path d="M0 1.500Q0 0 1.500 0H14.300V14.300H0z" fill="#3fc3f5"/><path d="M15.700 0H28.500Q30 0 30 1.500V14.300H15.700z" fill="#25aeee"/><path d="M0 15.700H14.300V30H1.500Q0 30 0 28.500z" fill="#1593e4"/><path d="M15.700 15.700H30V28.500Q30 30 28.500 30H15.700z" fill="#0a78d6"/></svg>
  <div class="tsearch"><svg width="18" height="19" viewBox="0 0 18 19" fill="none" stroke="#222" stroke-width="2"><circle cx="8" cy="8" r="6.500"/><path d="M12.500 13l5 5.500"/></svg><span>Search</span>
    <svg width="38" height="34" viewBox="0 0 38 34"><path d="M27 16c6-1 2-6 1-9-1-6 7-9 7-1 0 3-4 4-4 2" fill="none" stroke="#c58a34" stroke-width="2.600"/><path d="M1 4l5 3h5l5-4v10l-3 4h16c4 0 6 3 5 8l1 7h-4l-2-7-3 1-1 6h-4l-1-7h-5l-2 7H9l-1-10-3-6-4-3z" fill="#e0a24b"/><circle cx="6" cy="11" r="1.300" fill="#2a4a4a"/><circle cx="12" cy="11" r="1.300" fill="#2a4a4a"/><path d="M7 19l8-3" stroke="#3aa" stroke-width="2"/><path d="M20 18v5M25 18v5" stroke="#a8651d" stroke-width="1.500"/></svg></div>
  <div class="apps">
    <div><svg width="31" height="30" viewBox="0 0 31 30"><rect x="0" y="8" width="22" height="21" rx="1.500" fill="#333"/><rect x="8" y="1" width="22" height="20" rx="1.500" fill="#fff" opacity=".82"/></svg></div>
    <div><svg width="30" height="28" viewBox="0 0 30 28"><path d="M0 10L15 0l15 10z" fill="#0d5cab"/><path d="M4 8h22v10H4z" fill="#fff"/><path d="M0 10l15 9L30 10v17H0z" fill="#2aa5ea"/><path d="M0 27l15-9 15-8v17z" fill="#1690e0"/></svg></div>
    <div><svg width="30" height="26" viewBox="0 0 30 26"><path d="M7.500 0L15 5 7.500 10 0 5zM22.500 0L30 5l-7.500 5L15 5zM7.500 10l7.500 5-7.500 5L0 15zM22.500 10l7.500 5-7.500 5L15 15zM15 16.500l7 4.700-7 4.800-7-4.800z" fill="#000"/></svg></div>
    <div><svg width="31" height="30" viewBox="0 0 31 30"><path d="M12 1h7l1 4 3 2 4-1 4 6-3 3 3 4-4 6-4-1-3 2-1 4h-7l-1-4-3-2-4 1-4-6 3-4-3-3 4-6 4 1 3-2z" fill="#74818d"/><circle cx="15.500" cy="15" r="6.500" fill="#c9d2da"/><circle cx="15.500" cy="15" r="5" fill="#1463b8"/></svg></div>
    <div><svg width="28" height="28" viewBox="0 0 28 28"><circle cx="14" cy="14" r="14" fill="#229bd7"/><path d="M5 14l17-7-3 15-6-4-2 3-1-5z" fill="#fff"/></svg></div>
    <div class="run"><svg width="31" height="28" viewBox="0 0 31 28"><path d="M0 1q0-1 1-1h9l3 3h18v6H0z" fill="#dd9c10"/><path d="M0 5h31v20q0 2-2 2H2q-2 0-2-2z" fill="#fcca3e"/><path d="M6 28v-5q0-4 4-4h11q4 0 4 4v5z" fill="#1a79cf"/><path d="M11 23h9" stroke="#0b4f96" stroke-width="1.500"/></svg></div>
    <div><svg width="30" height="30"><use href="#chrome"/></svg></div>
    <div><svg width="31" height="30" viewBox="0 0 31 30"><path d="M1 13C3-4 29-4 30 11c0 7-8 8-11 6 2-8-9-12-18-4z" fill="#2fbfd4"/><path d="M15 0c9 0 15 5 15 11 0 7-8 8-11 6 2-5-1-12-8-16z" fill="#48d28a"/><path d="M0 17C1 7 12 5 18 10c-5 1-6 7-3 10 4 4 10 3 14 1-4 7-13 10-19 8C3 27 0 22 0 17z" fill="#1579cc"/><ellipse cx="8" cy="22" rx="7" ry="8" fill="#5d6367"/><circle cx="8.500" cy="18" r="2.500" fill="#c9b8a6"/></svg></div>
    <div class="wa"><svg width="34" height="34" viewBox="0 0 34 34"><path d="M3 31l2-8C1 15 6 6 16 6s16 7 14 15-12 12-20 8z" fill="#e8f5ee" stroke="#1a8a50" stroke-width="3"/><path d="M11 12c3-2 4 2 3 4 1 3 3 4 5 5 2-2 6 0 4 2-4 5-15-4-12-11z" fill="#1a8a50"/><circle cx="27" cy="11" r="11" fill="#237b8b"/><text x="27" y="16" class="bn">13</text></svg></div>
    <div><svg width="30" height="30" viewBox="0 0 30 30"><path d="M4 6l5 3c2-3 4-4 6-4l4-5c3 4 9 7 10 13C30 23 24 30 15 30S0 23 1 14c0-3 1-6 3-8z" fill="#ff9a2a"/><path d="M2 12c3-2 5 0 8 1-3 7 4 11 10 7 3-2 5-5 3-9 6 7 3 17-8 18S0 22 2 12z" fill="#fb3f5c"/><circle cx="16" cy="15" r="6" fill="#7b42c9"/><path d="M19 0c3 4 9 7 10 13-1 5-4 5-6 2 0-6-5-8-4-15z" fill="#ffd43a"/></svg></div>
    <div><svg width="24" height="30"><use href="#pbi"/></svg></div>
    <div class="run"><svg width="40" height="36" viewBox="0 0 40 36"><use href="#chrome" x="4" y="6" width="30" height="30"/><circle cx="30" cy="10" r="10" fill="#d9dcdc"/><path d="M25 19c-2-6 1-8 2-10 0-6 7-7 8 0 1 2 3 5 1 9-3 3-8 3-11 1z" fill="#20272a"/></svg></div>
    <div class="run"><svg width="40" height="36" viewBox="0 0 40 36"><use href="#chrome" x="4" y="6" width="30" height="30"/><circle cx="30" cy="10" r="10" fill="#4d6794"/><path d="M24 3c6-3 12 2 15 9-3 7-11 9-13 4 3-4 1-9-2-13z" fill="#201d26"/></svg></div>
    <div class="run act"><svg width="24" height="30"><use href="#pbi"/></svg></div>
    <div class="run"><svg width="40" height="36" viewBox="0 0 40 36"><use href="#chrome" x="4" y="6" width="30" height="30"/><circle cx="30" cy="10" r="10" fill="#8b6a60"/><text x="30" y="15" class="bn">M</text></svg></div>
  </div>
  <div class="tray">
    <svg class="t1" width="14" height="9" viewBox="0 0 14 9"><path d="M1 8l6-6 6 6" fill="none" stroke="#222" stroke-width="1.700"/></svg>
    <div class="lang">ENG<br>IN</div>
    <svg class="t2" width="20" height="16" viewBox="0 0 20 16" fill="none" stroke="#222" stroke-width="1.500"><path d="M1 6c5-6 13-6 18 0M4 9c4-4 8-4 12 0M7 12c2-2 4-2 6 0"/><circle cx="10" cy="14" r="1.300" fill="#222"/></svg>
    <svg class="t3" width="19" height="16" viewBox="0 0 19 16" fill="none" stroke="#222" stroke-width="1.500"><path d="M1 5.500h3l5-4v13l-5-4H1zM12 5c1.500 2 1.500 4 0 6M15 2c3 4 3 8 0 12"/></svg>
    <svg class="t4" width="22" height="18" viewBox="0 0 22 18"><rect x="2" y="4" width="16" height="11" rx="2" fill="none" stroke="#222" stroke-width="1.500"/><path d="M4 6h12v7H4zM19 8h2v4h-2z" fill="#222"/><path d="M5-1L0 7h3.500L2 13l6-8H5.500L7-1z" fill="#222" stroke="#dadada"/></svg>
    <div class="clock">23:31<br>08-08-2024</div>
    <svg class="t5" width="18" height="20" viewBox="0 0 18 20"><path d="M1 16c2-2 2-4 2-8 0-9 12-9 12 0 0 4 0 6 2 8zM6 17h6c0 3-6 3-6 0z" fill="#174a5b"/></svg>
    <svg class="t6" width="30" height="30" viewBox="0 0 30 30"><path d="M9 1h9c3 0 4 2 5 6h-4c-4 0-5 3-7 11-1 4-3 5-6 5-5 0-6-4-5-10C3 5 4 1 9 1z" fill="#1f9be0"/><path d="M3 8h15l-4 7H1z" fill="#2fbf7a" opacity=".8"/><path d="M19 7h4c6 0 6 4 5 9-2 8-4 10-9 10h-7c4-2 4-15 7-19z" fill="#d65be0"/><path d="M1 15l10-2-3 10H5c-4 0-4-4-4-8z" fill="#f7a23b"/><rect x="6" y="19" width="23" height="10" rx="2" fill="#ffc61a"/><text x="17.500" y="27.500" class="pre">PRE</text></svg>
  </div>
</footer>
<script src="app.js"></script>
</body>
</html>
```

FILE: styles.css
```css
* { box-sizing: border-box; }
body { margin: 0; width: 1920px; height: 1080px; overflow: hidden; display: flex; flex-direction: column; font-family: "Open Sans", "Noto Sans", sans-serif; font-size: 14px; color: #252423; background: #f3f2f1; letter-spacing: -0.2px; }
svg { display: block; flex: none; overflow: visible; }
.defs { height: 0; }
h2, h3, h4, p { margin: 0; }
.ln { fill: none; stroke-width: 1.5; }
.ln.w { stroke: #fff; }
.ln.dim { stroke: #73716f; }

/* title bar */
.titlebar { height: 43px; flex: none; background: #3b3a37; color: #fff; display: flex; align-items: center; }
.quick { width: 126px; padding-left: 22px; display: flex; gap: 19px; }
.doc { width: 675px; padding-top: 5px; display: flex; align-items: center; gap: 9px; white-space: nowrap; font-size: 14.500px; letter-spacing: -0.12px; }
.caret { border: 5px solid transparent; border-top: 6px solid #fff; border-bottom: 0; }
.topsearch { width: 500px; height: 30px; background: #d4d4d2; border-radius: 2px; display: flex; align-items: center; gap: 14px; padding-left: 21px; margin-bottom: 1px; color: #2b6458; font-size: 16.500px; }
.user { width: 619px; padding-left: 172px; display: flex; align-items: center; font-size: 14.200px; white-space: nowrap; letter-spacing: 0; }
.user span { width: 237px; }
.user .avatar { margin-right: 40px; }
.user .avatar ~ svg + svg { margin-left: 41px; }

/* menu */
.menu { height: 38px; flex: none; background: #fafafa; display: flex; align-items: flex-start; font-size: 16.800px; letter-spacing: -0.1px; }
.menu a { height: 38px; line-height: 39px; }
.m1 { margin-left: 28px; width: 73px; }
.m2 { width: 48px; margin-right: 39px; white-space: nowrap; }
.m3 { width: 83px; }
.m4 { width: 114px; }
.m5 { width: 75px; }
.m6 { width: 110px; }
.menu .on { font-weight: 600; border-bottom: 3px solid #117865; font-size: 16.500px; letter-spacing: -0.25px; }
.share { margin: 5px 7px 0 auto; width: 105px; height: 30px; border: 0; border-radius: 4px; background: #117865; color: #fff; font: 15px "Open Sans", sans-serif; letter-spacing: -0.4px; display: flex; align-items: center; padding: 0 0 0 8px; }
.share span { margin: 0 6px 0 10px; }

/* ribbon */
.ribbon { height: 119px; flex: none; background: #fafafa; display: flex; padding-top: 7px; color: #323130; position: relative; z-index: 2; box-shadow: 0 2px 5px rgba(0,0,0,.18); }
.group { height: 111px; border-right: 1px solid #d2d0ce; display: flex; flex-direction: column; align-items: center; justify-content: space-between; }
.group b { font-weight: 400; font-size: 12px; line-height: 15px; letter-spacing: -0.2px; }
.btns { display: flex; align-self: flex-start; padding-top: 6px; }
.btn { display: flex; flex-direction: column; align-items: center; gap: 3px; }
.btn span { font-size: 14px; line-height: 20px; text-align: center; white-space: nowrap; letter-spacing: 0; }
.btn[data-w="60"] { width: 60px; } .btn[data-w="90"] { width: 90px; } .btn[data-w="38"] { width: 38px; } .btn[data-w="62"] { width: 62px; }
.btn[data-w="58"] { width: 58px; } .btn[data-w="81"] { width: 81px; } .btn[data-w="78"] { width: 78px; } .btn[data-w="44"] { width: 44px; }
.btn[data-w="50"] { width: 50px; } .btn[data-w="63"] { width: 63px; } .btn[data-w="61"] { width: 61px; } .btn[data-w="76"] { width: 76px; }
.w-paste { width: 36px; }
.off { color: #c3c1bf; }
.dd { display: inline-block; width: 5px; height: 5px; border: solid; border-width: 0 1.500px 1.500px 0; transform: rotate(45deg); margin: 0 2px 3px 3px; }
.small { display: flex; flex-direction: column; gap: 10px; margin: -2px 0 0 13px; }
.small div { display: flex; align-items: center; gap: 4px; height: 20px; white-space: nowrap; font-size: 14px; letter-spacing: -0.05px; }
.g-clip { width: 201px; } .g-clip .btns { padding-left: 17px; }
.g-data { width: 459px; } .g-data .btns { padding-left: 5px; }
.g-query { width: 145px; } .g-query .btns { padding-left: 7px; }
.g-insert { width: 184px; } .g-insert .btns { padding-left: 10px; }
.g-calc { width: 143px; } .g-calc .btns { padding-left: 10px; }
.g-sens { width: 91px; } .g-sens .btns { padding-left: 7px; }
.g-share { width: 74px; } .g-share .btns { padding-left: 7px; }
.g-cop { width: 73px; } .g-cop .btns { padding-left: 6px; }
.collapse { margin: 97px 6px 0 auto; }
.xl { fill: #fff; font: 700 14px "Open Sans"; text-anchor: middle; }
.tb { fill: #2b88d8; font: 22px "Open Sans"; text-anchor: middle; }

/* workspace */
.work { height: 791px; flex: none; display: flex; border-bottom: 1px solid #dcdad8; }
.rail { width: 51px; border-right: 1px solid #dcdad8; background: #f3f2f1; display: flex; flex-direction: column; }
.rail div { height: 50px; display: flex; align-items: center; justify-content: center; border-left: 3px solid transparent; padding: 0 3px 2px 0; }
.rail .sel { border-color: #117865; padding-bottom: 0; }
.dax { font: 700 8.500px "Open Sans"; fill: #605e5c; stroke: #f3f2f1; stroke-width: 2px; paint-order: stroke; }
.center { width: 1418px; display: flex; flex-direction: column; border-right: 1px solid #dcdad8; }
.stage { height: 746px; display: flex; background: #fff; padding-left: 25px; }
.report { width: 1326px; height: 746px; display: grid; grid-template-columns: 653px 620px; grid-template-rows: 318px 386px; gap: 14px 33px; padding: 15px 0 0 10px; box-shadow: 0 0 16px rgba(0,0,0,.25);
  background: repeating-linear-gradient(0deg, rgba(50,110,100,.14) 0 1px, transparent 1px 4px), repeating-linear-gradient(90deg, rgba(50,110,100,.14) 0 1px, transparent 1px 4px), #000; position: relative; }
.report::after { content: ""; position: absolute; inset: 0; background: linear-gradient(transparent 10%, rgba(0,0,0,.85) 80%); z-index: 0; }
.card { z-index: 1; border: 1px solid #5f3f98; border-radius: 14px; color: #d6d5d4; background: repeating-linear-gradient(0deg, rgba(80,110,100,.1) 0 1px, transparent 1px 4px), repeating-linear-gradient(90deg, rgba(80,110,100,.1) 0 1px, transparent 1px 4px), #393939; display: flex; flex-direction: column; }
.c2 { margin-left: 1px; margin-right: -1px; background: #393939; }
.c3 { grid-column: 2; grid-row: 1 / 3; background: linear-gradient(#3c3e3e, #383838); }
.card h3 { font: 500 16.500px/20px Roboto, sans-serif; letter-spacing: 0.4px; text-align: center; padding-top: 6px; height: 27px; color: #c8c7c6; }
.card.c2 h3 { padding-top: 7px; }
.grid { stroke: #a8a8a8; stroke-width: 1.300; stroke-dasharray: 1.300 4; fill: none; }
.series { stroke: #118dff; stroke-width: 3.300; fill: none; stroke-linejoin: round; }
.fore { fill: #cf3a3a; opacity: .2; }
.xl1 { font: 13.300px "Open Sans"; fill: #d6d5d4; text-anchor: middle; letter-spacing: -0.5px; }
.yl1 { font: 15.500px "Open Sans"; fill: #d6d5d4; text-anchor: end; letter-spacing: -0.5px; }
.yt { font: 600 14.200px "Open Sans"; fill: #e8e8e8; text-anchor: middle; letter-spacing: 0.1px; }
.barwrap { display: flex; height: 622px; margin-top: 11px; margin-left: -1px; }
#bars { width: 601px; padding-top: 6px; }
.row { height: 21px; display: flex; align-items: center; }
.row span { width: 143px; text-align: right; font-size: 13.300px; letter-spacing: -0.15px; }
.row i { height: 17px; margin-left: 9px; background: #e0c234; border: 1px solid #a9942f; }
.scroll { width: 8px; background: #8c8c8c; border-radius: 4px; }
.scroll div { height: 368px; background: #666; border: 1px solid #fff; border-radius: 4px; }
.ticks { display: flex; padding-left: 91px; margin-top: 3px; font-size: 15.500px; line-height: 22px; letter-spacing: -0.4px; }
.ticks span { width: 122.700px; text-align: center; }
.axt { font: 600 14px/18px Roboto, sans-serif; letter-spacing: 0.2px; text-align: center; padding: 3px 0 0 115px; color: #e3e2e1; }
.filters { width: 41px; margin-left: 25px; border-left: 1px solid #b3b0ad; display: flex; flex-direction: column; align-items: center; padding-top: 15px; gap: 19px; }
.filters span { writing-mode: vertical-rl; font-size: 17px; font-weight: 600; letter-spacing: 0.2px; margin-top: -9px; }
.filters svg + svg { margin-left: 4px; }
.tabs { height: 44px; display: flex; background: #f3f2f1; padding-left: 12px; flex: none; }
.dev { width: 30px; display: flex; justify-content: center; padding-top: 8px; }
.dev.on { border-bottom: 3px solid #117865; height: 38px; }
.dev.ph { margin-left: 25px; padding-top: 5px; }
.arr { width: 62px; padding: 15px 0 0 18px; }
.tab { width: 96px; background: #fff; border-left: 1px solid #8a8886; text-align: center; line-height: 45px; font-size: 14.500px; letter-spacing: -0.4px; position: relative; }
.tab.cur { width: 97px; padding-right: 2px; border-bottom: 5px solid #117865; border-left-color: #d2d0ce; font-weight: 500; }
.tab i { position: absolute; right: 6px; top: 2px; font-style: normal; line-height: 18px; font-size: 13px; }
.add { width: 49px; background: #117865; display: flex; align-items: center; justify-content: center; padding-bottom: 2px; }

/* panes */
.vis { width: 226px; border-right: 1px solid #dcdad8; }
.data { width: 225px; }
.phead { display: flex; justify-content: space-between; padding: 10px 10px 0 10px; align-items: center; height: 40px; }
.phead h2 { font-size: 19px; font-weight: 600; letter-spacing: -0.15px; line-height: 26px; }
.data .phead { padding-right: 10px; }
.vis h4 { font-size: 14px; font-weight: 500; padding: 8px 10px 0; height: 32px; line-height: 19px; letter-spacing: 0.25px; }
.modes { display: flex; padding-left: 10px; gap: 48px; height: 40px; }
.mode { width: 40px; height: 40px; padding-top: 4px; }
.mode.on { background: #c8c6c4; border-radius: 2px; padding: 0; }
.notch { margin-top: 5px; }
.vgrid { display: grid; grid-template-columns: repeat(6, 24px); gap: 12px 11px; grid-auto-rows: 23px; padding: 13px 0 0 14px; }
.vgrid svg { width: 23px; height: 23px; }
.ax { fill: none; stroke: #3b3a39; stroke-width: 1.500; }
.wf { fill: #fff; stroke: #484644; stroke-width: 1.300; }
.g { fill: #c2c0be; stroke: #797775; stroke-width: 1.200; }
.b { fill: #83beec; stroke: #0f6cbd; stroke-width: 1.300; }
.n123 { font: 10.500px "Open Sans"; fill: #2b88d8; text-anchor: middle; letter-spacing: -0.3px; }
.big { font: 700 20px "Open Sans"; fill: #2b88c8; letter-spacing: -0.5px; }
.dots { padding: 7px 0 0 15px; height: 45px; font-size: 16px; line-height: 14px; margin-top: 1px; letter-spacing: 0; border-bottom: 1px solid #dcdad8; }
.wells { padding: 11px 7px 0 5px; letter-spacing: 0.05px; }
.wells p { padding-left: 10px; line-height: 22px; }
.well { height: 35px; margin-top: 5px; background: #fff; border: 1px dashed #c2c0be; line-height: 34px; padding-left: 12px; font-size: 14px; white-space: nowrap; }
.wells p.drill { margin-top: 13px; font-weight: 600; color: #3b3a39; letter-spacing: -0.5px; }
.opt { display: flex; justify-content: space-between; align-items: center; padding: 0 20px 0 10px; height: 20px; margin-top: 10px; }
.opt + .opt { margin-top: 14px; }
.tog { width: 40px; height: 20px; border: 1px solid #797775; border-radius: 10px; background: #fff; display: flex; align-items: center; gap: 2px; padding: 0 5px; font-size: 11px; color: #605e5c; }
.tog i { width: 10px; height: 10px; border-radius: 5px; background: #605e5c; }
.tog.yes { background: #117865; color: #fff; border-color: #117865; gap: 4px; }
.tog.yes i { background: #fff; }
.well.two { height: 32px; margin-top: 13px; line-height: 31px; padding-left: 10px; letter-spacing: 0.12px; }
.dsearch { margin: 17px 5px 0 5px; height: 30px; background: #fff; border: 1px solid #d2d0ce; border-bottom-color: #605e5c; border-radius: 4px; display: flex; align-items: center; gap: 9px; padding: 2px 0 0 14px; font-size: 16.300px; color: #605e5c; }
.sheet { display: flex; align-items: center; gap: 5px; padding-left: 16px; height: 30px; margin-top: 11px; color: #3b3a39; }
.sheet span { margin-left: 2px; }
.field { height: 30px; display: flex; align-items: center; color: #3b3a39; padding-left: 38px; white-space: nowrap; letter-spacing: 0.03px; }
.field .chev { width: 17px; height: 16px; }
.field .box { width: 15px; height: 15px; border: 1px solid #797775; border-radius: 2px; margin-right: 10px; }
.field .ico { width: 16px; height: 16px; margin-right: 6px; }

/* status bar */
.status { height: 28px; flex: none; border-bottom: 1px solid #000; display: flex; justify-content: space-between; align-items: center; padding: 3px 21px 0 5px; color: #484644; font-size: 14px; letter-spacing: -0.05px; }
.zoom { display: flex; align-items: center; }
.zoom b { width: 12px; line-height: 18px; font-size: 16px; font-weight: 600; }
.zoom svg + b { width: 26px; padding-left: 6px; margin-right: 6px; }
.zoom span { width: 52px; }

/* taskbar */
.taskbar { height: 61px; flex: none; background: #dadada; border-top: 1px solid #999; display: flex; align-items: center; color: #222; }
.weather { width: 313px; padding-left: 25px; margin-top: -6px; }
.temp { font: 13px "Open Sans"; text-anchor: middle; fill: #111; letter-spacing: -0.5px; }
.tsearch { width: 273px; height: 40px; margin-left: 16px; border-radius: 20px; background: #f4f4f4; border: 1px solid #c4c4c4; display: flex; align-items: center; padding: 0 16px 0 14px; font-size: 16px; color: #484848; }
.tsearch span { margin-left: 13px; margin-right: auto; }
.apps { display: flex; margin-left: 4px; }
.apps div { width: 55px; height: 48px; display: flex; align-items: center; justify-content: center; position: relative; }
.apps .run::after { content: ""; position: absolute; bottom: 0; left: 24px; width: 7px; height: 4px; border-radius: 2px; background: #7c7c7c; }
.apps .act { width: 48px; margin: 0 3.500px; background: #eee; border-radius: 4px; }
.apps .act::after { left: 14px; width: 20px; background: #237b8b; }
.apps svg[width="40"], .wa svg { margin-top: -5px; }
.bn { font: 600 13px "Open Sans"; fill: #fff; text-anchor: middle; letter-spacing: -0.5px; }
.tray { display: flex; align-items: center; font-size: 14px; line-height: 20px; margin-left: 84px; letter-spacing: 0; }
.lang { width: 40px; text-align: center; margin-left: 22px; }
.t2 { margin-left: 17px; } .t3 { margin-left: 9px; } .t4 { margin-left: 12px; }
.clock { width: 88px; text-align: right; margin-left: 7px; font-size: 14.300px; }
.t5 { margin-left: 11px; } .t6 { margin-left: 22px; }
.pre { font: 700 9px "Open Sans"; text-anchor: middle; letter-spacing: 0; }
```

FILE: app.js
```js
// Daily sales in thousands: position on the time axis, high, low.
const sales = `356 2.15 .1,363 1.9 .05,376 1.1 .1,381 1.25 .2,386 1.8 .9,392 .6 0,396 3.15 .2,400 5.05 1.2,405 3.05 .2,410 1.4 .15,415 1.4 .1,420 1.2 .05,429 1.55 .1,435 .9 0,440 5.5 .1,443 7.3 .2,449 2.2 0,455 7.9 1.2,459 8.9 .7,465 2.4 .7,472 1 .1,477 1.4 .2,483 2.7 .1,488 2.2 0,493 1.6 .8,498 2.95 1,503 .9 0,510 9.4 .4,513 2.5 .4,518 1.8 .2,523 1.7 .1,530 .6 .1,537 2.7 .2,541 4.85 .3,546 1.3 0,553 1 .2,560 2.7 .2,564 4.6 .2,571 5.35 1,575 8.1 .7,580 2.3 .1,587 6.1 0,592 2.3 .4,598 3.5 .2,603 3 0,613 5.35 .8,618 1.6 .5,622 1.8 .2,626 1.9 .7,632 3.95 .8,640 1 .1,643 2.2 .3,648 2.95 .4,655 1 .1,659 5.95 .3,663 3 .9,669 2.2 .8,675 .8 .2,681 1.2 .1,686 4 .1,691 1.8 0,696 .8 0,700 4.85 .4,708 4.9 .3,714 1 0,717 6.85 0,722 5.3 1.3,726 4.6 0,731 6.55 1.2,738 2.2 .4,742 4.8 1,750 3.5 .6,757 1.4 0,762 1.4 .3,765 6 .7,770 1 .1,776 .7 0,780 3.4 .1,785 3 .2,790 8 .1,796 1.4 .2,802 3 .2,806 3.8 .5,812 4.3 .5,818 4 .4,823 5 1.8,828 2 0,832 4 .6,838 3 .1,843 8.4 1.6,847 7 .4,852 6.4 .3,856 5.3 .9,860 4.3 2,867 6.15 .9,873 2.7 .6,878 7.1 .1,883 5.1 1.5,888 7.55 .9,893 2 .8,898 2.7 1,907 3.8 .1,914 4.9 .8,921 6.6 2.6,929 4.7 .7,936 3.6 .6,941 4.6 1,946 5.7 1,951 4.6 .1,957 3.2 2.2,962 3.1 2.4,968 3.8 .4,973 4.75 1,982 3.35 1,990 2.3 .8,996 1.8 .4,1001 2.4 .6,1006 6.1 .1,1013 3 1.2,1020 4.8 1.3,1025 4.3 1.6,1034 6.8 .1,1045 6.8 .2,1051 1.5 .3,1058 4.5 .8,1066 2.3 .3,1073 1.2 .3,1080 5.45 .8,1089 4 1.1,1099 5.8 1.1,1106 6.05 .2,1117 2.9 .6,1126 5.9 .8,1132 2 .2,1139 3.5 1.3,1147 5 1.4,1155 3 .9,1163 5 1.8,1168 5.5 2,1173 8.2 .3,1181 3.4 .6,1187 1 0,1190 4.4 .4,1200 5.25 .6,1207 2.4 1.4,1216 2.5 .7,1222 1 .3,1226 4.5 1.2,1234 4.4 1.1,1240 10.65 .2,1246 10 .8,1250 5 .6,1256 7.4 .5,1265 11.85 1.6,1269 7.6 .6,1275 6.7 3,1279 7.1 .1,1284 9 2,1290 8.3 1,1294 9.5 1.9,1299 8 1.3,1303 3.5 .9,1309 7.4 .9,1314 7.7 .1,1320 3.4 1,1326 9.4 .5,1333 4.2 .5,1338 6 1,1343 3 .5,1350 5.7 .1,1356 8.2 3,1362 6.6 .4,1368 4.8 2,1372 8 .6,1378 9.7 3,1382 8.4 .2,1388 6.7 3,1394 5.8 .5,1399 7.7 3,1406 3 .2,1411 9.7 4,1415 9.3 2.2,1420 6.3 3,1425 10.7 4,1430 7.9 4,1435 9.8 2,1440 6.6 2.8,1444 3.1 2.9`
  .split(",").map(r => r.split(" ").map(Number));
const months = ["Jan 2019", "Apr 2019", "Jul 2019", "Oct 2019", "Jan 2020", "Apr 2020", "Jul 2020", "Oct 2020", "Jan 2021"];
const monthX = [82, 146.5, 211.5, 277.5, 343, 408, 473.5, 539, 604.5];

function lineChart(id, o) {
  const X = t => 82 + (t - 354) * 0.4785;
  const Y = v => o.zero - v * o.perK;
  const pts = [];
  sales.forEach(([t, hi, lo], i) => {
    pts.push([X(t), Y(hi)]);
    const next = sales[i + 1];
    if (!next) return;
    const gap = next[0] - t;
    pts.push([X(t + Math.min(2, gap / 3)), Y(lo)]);
    if (gap > 3) {
      const fill = Math.min(hi, next[1], Math.max(lo + 1.2, Math.min(hi, next[1]) * 0.75));
      pts.push([X(t + gap / 2), Y(fill)]);
      pts.push([X(next[0] - 1.5), Y(Math.min(lo + 0.2, hi))]);
    }
  });
  let s = "";
  monthX.forEach((x, i) => {
    s += `<path class="grid" d="M${x} ${o.top}V${o.zero}"/><text class="xl1" x="${x + 0.5}" y="${o.zero + 17}">${months[i]}</text>`;
  });
  [0, 5, 10].forEach(v => {
    s += `<path class="grid" d="M71 ${Y(v)}H622"/><text class="yl1" x="61" y="${Y(v) + 5}">${v}K</text>`;
  });
  s += `<path class="fore" d="M605 ${Y(9.3)}l8-4V${Y(1.05)}l-8-5z"/>`;
  s += `<polyline class="series" points="${pts.map(p => p.map(n => n.toFixed(1)).join(",")).join(" ")}"/>`;
  s += `<text class="yt" transform="translate(24 ${o.mid}) rotate(-90)">Sum of Sales</text>`;
  document.getElementById(id).innerHTML = s;
}
lineChart("line1", { top: 13, zero: 251.7, perK: 19.87, mid: 132 });
lineChart("line2", { top: 14, zero: 320, perK: 25.5, mid: 166 });

const states = [["California", 412], ["New York", 229], ["Texas", 143], ["Washington", 114.5], ["Pennsylvania", 101.5], ["Ohio", 84.5], ["Illinois", 79.5], ["Florida", 61.5], ["Michigan", 60], ["North Carolina", 49], ["Georgia", 46], ["Virginia", 40.5], ["New Jersey", 40], ["Indiana", 39.5], ["Colorado", 36.5], ["Tennessee", 32.5], ["Kentucky", 30], ["Arizona", 28.5], ["Wisconsin", 27], ["Oklahoma", 22], ["Maryland", 20], ["Connecticut", 19], ["Missouri", 18], ["Massachusetts", 18], ["Rhode Island", 17.5], ["Delaware", 16], ["Alabama", 15.5], ["Nevada", 15], ["Minnesota", 13.5]];
document.getElementById("bars").innerHTML = states
  .map(([n, w]) => `<div class="row"><span>${n}</span><i style="width:${w}px"></i></div>`).join("");

const chevron = '<svg width="9" height="15" viewBox="0 0 9 15" class="ln" stroke="#605e5c"><path d="M1 1l6.500 6.500L1 14"/></svg>';
const calendar = '<svg width="16" height="16"><use href="#cal"/></svg>';
const sigma = '<svg width="14" height="16" viewBox="0 0 14 16" class="ln" stroke="#333"><path d="M13 3V1H1l6 7-6 7h12v-2"/></svg>';
const fields = ["Category", "City", "Country", "Customer ID", "Customer Name", "Order Date|d", "Order ID", "Payment Mode", "Product ID", "Product Name", "Profit|s", "Quantity|s", "Region", "Returns", "Row ID+O6G3A...|s", "Sales|s", "Segment", "Ship Date|d", "Ship Mode", "State", "Sub-Category"];
document.getElementById("fields").innerHTML = fields.map(f => {
  const [name, kind] = f.split("|");
  return `<div class="field"><div class="chev">${kind === "d" ? chevron : ""}</div><div class="box"></div><div class="ico">${kind === "d" ? calendar : kind === "s" ? sigma : ""}</div><span>${name}</span></div>`;
}).join("");
```
